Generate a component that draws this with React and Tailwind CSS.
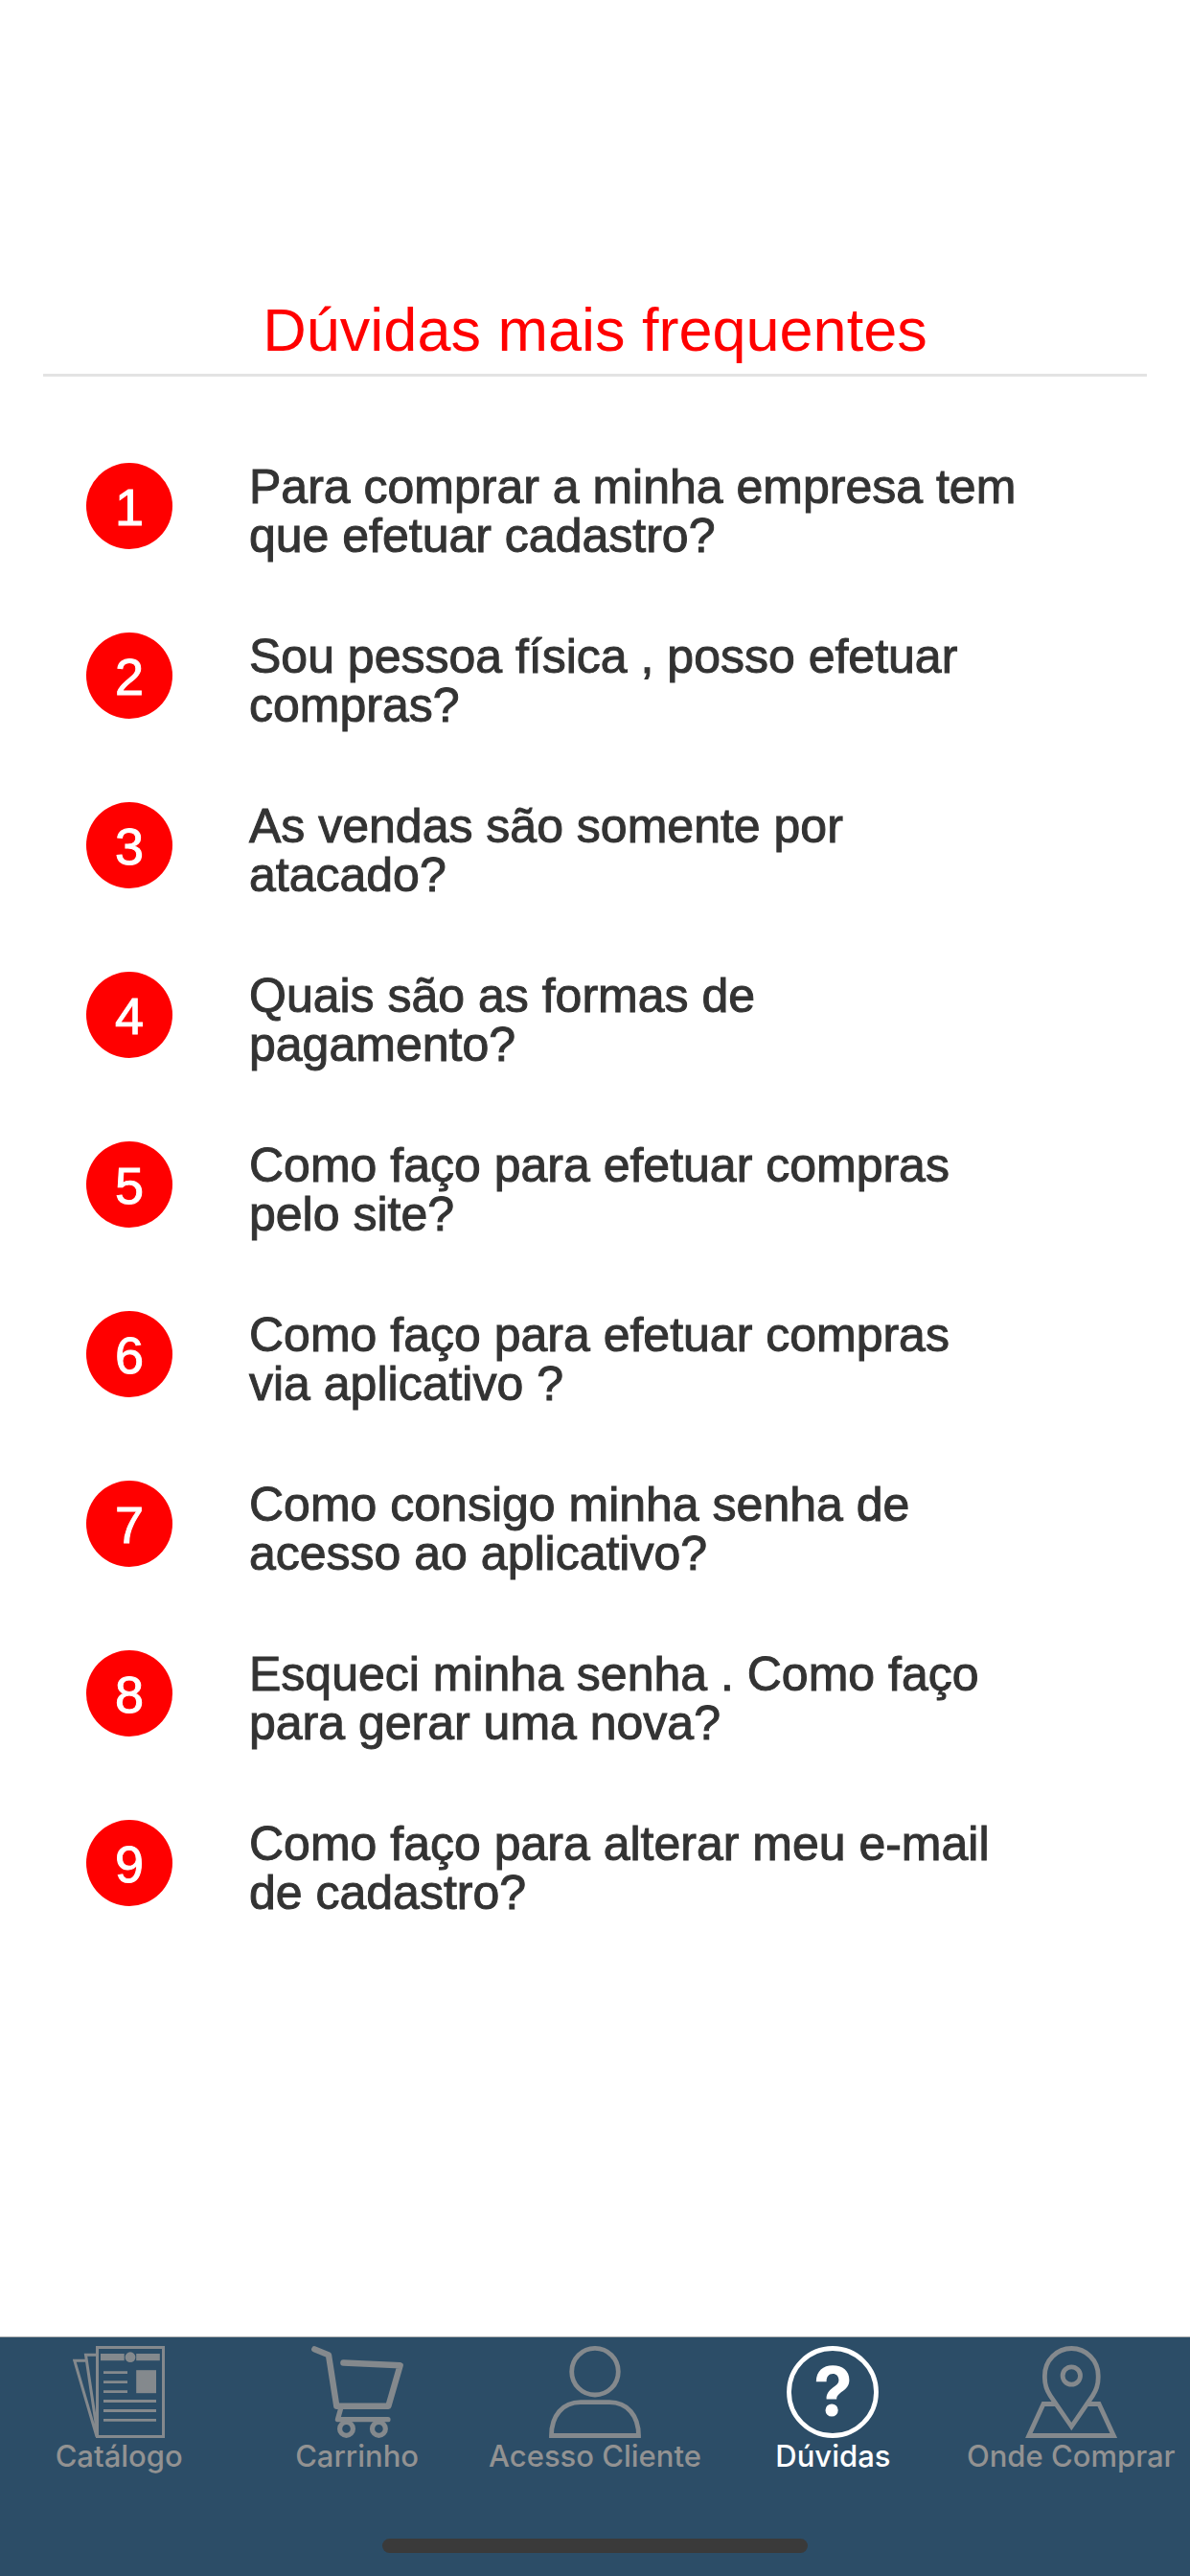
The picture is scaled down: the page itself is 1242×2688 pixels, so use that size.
import { useState } from "react";
import clsx from "clsx";

const QUESTIONS = [
    'Para comprar a minha empresa tem que efetuar cadastro?',
    'Sou pessoa física , posso efetuar compras?',
    'As vendas são somente por atacado?',
    'Quais são as formas de pagamento?',
    'Como faço para efetuar compras pelo site?',
    'Como faço para efetuar compras via aplicativo ?',
    'Como consigo minha senha de acesso ao aplicativo?',
    'Esqueci minha senha . Como faço para gerar uma nova?',
    'Como faço para alterar meu e-mail de cadastro?',
]

function Icon({ children }){
    return (
        <svg viewBox="0 0 96 96" className="size-24 shrink-0" fill="none" stroke="currentColor" strokeWidth="4.8" aria-hidden="true">
            {children}
        </svg>
    )
}

function CatalogIcon(){
    return (
        <Icon>
            <g strokeWidth="3">
                <rect x="25.5" y="1.5" width="69" height="93" />
                <path d="M24 9.3H13.5L25.5 90M13 15.3H1.8L25 94.5" />
                <path strokeWidth="2.8" d="M32 27.6H57M32 37.6H57M32 47.6H57M32 57.5H87M32 67.5H87M32 77.3H87" />
            </g>
            <g fill="currentColor" stroke="none">
                <rect x="29" y="8" width="24.7" height="7.2" />
                <rect x="66.2" y="8" width="24.6" height="7.2" />
                <circle cx="60" cy="11.7" r="5.4" />
                <rect x="66.2" y="25.2" width="20.8" height="24" />
            </g>
        </Icon>
    )
}

function CartIcon(){
    return (
        <Icon>
            <g strokeLinecap="round" strokeLinejoin="round">
                <path strokeWidth="6.4" d="M3.3 3.4 18 9.4 26.3 62.7H80.4L92.7 20.2 33.4 17.5" />
                <path strokeWidth="5.2" d="M31 64 27.4 76.7H80" />
            </g>
            <circle cx="36.5" cy="86.4" r="6.9" strokeWidth="5.2" />
            <circle cx="70.4" cy="86.4" r="6.9" strokeWidth="5.2" />
        </Icon>
    )
}

function UserIcon(){
    return (
        <Icon>
            <circle cx="48" cy="26.7" r="24.3" />
            <path d="M2.5 93.5C2.5 73 14 58.7 33 58.7H63C82 58.7 93.5 73 93.5 93.5Z" />
        </Icon>
    )
}

function QuestionIcon(){
    return (
        <Icon>
            <circle cx="48" cy="48" r="45.5" />
            <g fill="currentColor" stroke="none">
                <path d="M30.8 37.2C31 26 38 20.2 48.2 20.2C58.5 20.2 65.4 26 65.4 35.4C65.4 47.2 52.2 47.4 52.2 55.4H41.6C41.6 43.4 54.4 43 54.4 35.8C54.4 31.6 51.8 29 48.2 29C44 29 41.6 32 41.6 37.2Z" />
                <circle cx="47.1" cy="67" r="6.6" />
            </g>
        </Icon>
    )
}

function PinIcon(){
    return (
        <Icon>
            <path d="M48.3 84 26.2 51.8C22 45.6 20.4 40.4 20.4 33V31C20.4 15 33 2.5 48.3 2.5S76.2 15 76.2 31V33C76.2 40.4 74.6 45.6 70.4 51.8Z" />
            <circle cx="48.3" cy="31" r="9.2" />
            <path d="M32 60.5H19L3.8 93.5H92.3L77 60.5H64.6" />
        </Icon>
    )
}

const TABS = [
    { label: 'Catálogo', icon: CatalogIcon },
    { label: 'Carrinho', icon: CartIcon },
    { label: 'Acesso Cliente', icon: UserIcon },
    { label: 'Dúvidas', icon: QuestionIcon },
    { label: 'Onde Comprar', icon: PinIcon },
]

function QuestionRow({ number, text }){
    return (
        <li>
            <button type="button" className="w-full flex items-start text-left">
                <span className="size-[90px] shrink-0 rounded-full bg-[#ff0000] text-white text-[54px] leading-[92px] text-center [-webkit-text-stroke:1px]">
                    {number}
                </span>
                <span className="ml-20 flex-1 text-[50px] leading-[51px] text-[#333333] [-webkit-text-stroke:1px]">
                    {text}
                </span>
            </button>
        </li>
    )
}

function TabBar({ active, onChange }){
    return (
        <nav className="border-t border-[#a9acae] bg-[#2c4d67] pt-[9px] pb-6 font-[Inter,sans-serif]">
            <div className="grid grid-cols-5">
                {TABS.map(({ label, icon: TabIcon }) => (
                    <button
                        key={label}
                        type="button"
                        onClick={() => onChange(label)}
                        className={clsx('flex flex-col items-center', active === label ? 'text-white' : 'text-[#84898d]')}
                    >
                        <TabIcon />
                        <span className={clsx(
                            'text-[31px] leading-[38px] font-medium whitespace-nowrap',
                            active !== label && 'text-[#929292]'
                        )}>
                            {label}
                        </span>
                    </button>
                ))}
            </div>
            {/* Home indicator */}
            <div className="mx-auto mt-[67px] h-[15px] w-[444px] rounded-full bg-[#3a3a3a]" />
        </nav>
    )
}

export default function App(){
    const [tab, setTab] = useState('Dúvidas')

    return (
        <div className="min-h-screen flex flex-col bg-white font-['Liberation_Sans',Arial,sans-serif]">
            <main className="flex-1 px-[45px] pt-[307px]">
                <h1 className="border-b-3 border-[#e3e3e3] pb-[9px] text-center text-[63px] leading-[74px] text-[#ff0000]">
                    Dúvidas mais frequentes
                </h1>
                <ol className="flex flex-col gap-[75px] pt-[90px] pb-20 pl-[45px] pr-[131px]">
                    {QUESTIONS.map((q, i) => <QuestionRow key={q} number={i + 1} text={q} />)}
                </ol>
            </main>
            <TabBar active={tab} onChange={setTab} />
        </div>
    )
}
